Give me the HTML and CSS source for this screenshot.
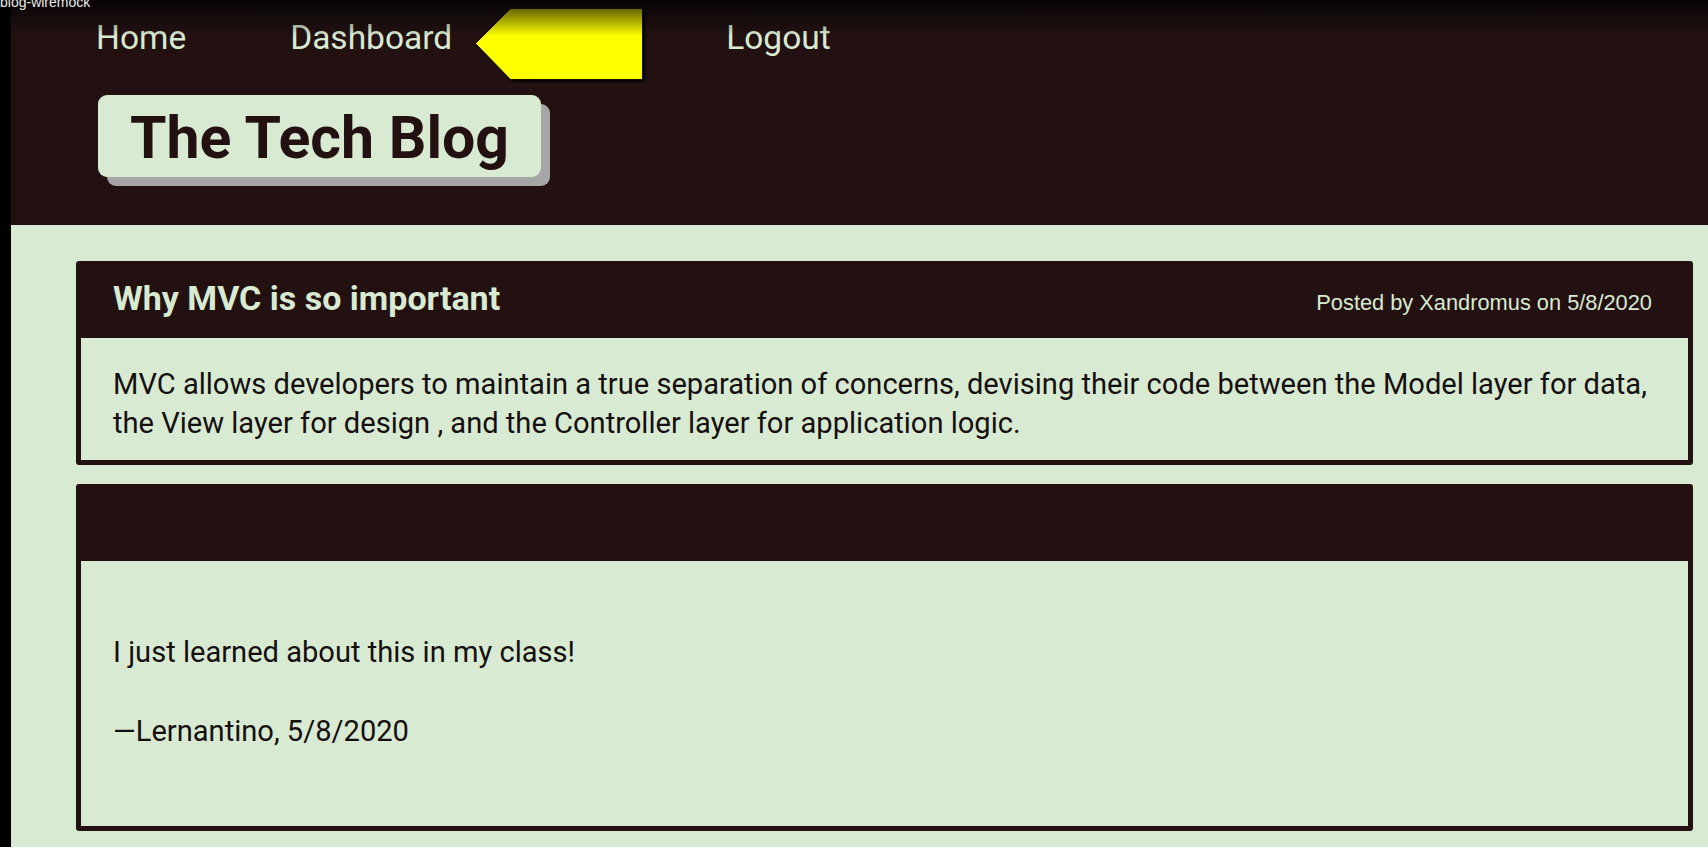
FILE: index.html
```html
<!DOCTYPE html>
<html lang="en">
<head>
<meta charset="utf-8">
<title>The Tech Blog</title>
<link rel="stylesheet" href="styles.css">
</head>
<body>
  <div class="frame">
    <div class="strip"></div>
    <div class="page">
      <header class="site-header">
        <nav class="nav">
          <a href="#" class="nav-link">Home</a>
          <a href="#" class="nav-link">Dashboard</a>
          <a href="#" class="nav-link logout">Logout</a>
        </nav>
        <svg class="pointer" width="172" height="76" viewBox="0 0 172 76" aria-hidden="true">
          <polygon points="0.5,35.5 35.5,0.5 167.5,0.5 167.5,71.5 35.5,71.5" fill="#ffff00" stroke="#1b1700" stroke-width="1"/>
        </svg>
        <div class="brand">
          <h1 class="brand-title">The Tech Blog</h1>
        </div>
      </header>
      <main class="posts">
        <article class="card">
          <div class="card-head">
            <h2 class="card-title">Why MVC is so important</h2>
            <span class="card-meta">Posted by Xandromus on 5/8/2020</span>
          </div>
          <div class="card-body">
            <p>MVC allows developers to maintain a true separation of concerns, devising their code between the Model layer for data, the View layer for design , and the Controller layer for application logic.</p>
          </div>
        </article>
        <article class="card">
          <div class="card-head"></div>
          <div class="card-body comment">
            <p>I just learned about this in my class!</p>
            <p>—Lernantino, 5/8/2020</p>
          </div>
        </article>
      </main>
    </div>
  </div>
  <div class="video-shade"></div>
  <div class="video-title">blog-wiremock</div>
</body>
</html>
```
FILE: styles.css
```css
html, body {
  margin: 0;
  padding: 0;
}

body {
  background: #000;
  font-family: Roboto, "Noto Sans", "Liberation Sans", sans-serif;
  height: 847px;
  overflow: hidden;
  position: relative;
}

.frame {
  display: flex;
  min-height: 847px;
}

.strip {
  flex: none;
  width: 11px;
  background: #000;
}

.page {
  flex: 1;
  background: #d9ead3;
  min-width: 0;
}

.site-header {
  position: relative;
  background: #231112;
  height: 225px;
  box-sizing: border-box;
  padding-top: 18px;
}

.nav {
  display: flex;
  align-items: center;
  gap: 104px;
  padding-left: 85px;
  height: 40px;
}

.nav-link {
  color: #d9ead3;
  font-size: 33.5px;
  line-height: 40px;
  text-decoration: none;
}

.nav-link.logout {
  margin-left: 170px;
}

.pointer {
  position: absolute;
  left: 464px;
  top: 8px;
  filter: drop-shadow(2px 2px 1px rgba(0, 0, 0, 0.85));
}

.brand {
  margin-top: 37px;
  padding-left: 87px;
}

.brand-title {
  display: inline-block;
  margin: 0;
  padding: 14px 32px 10px 32px;
  background: #d9ead3;
  color: #231112;
  font-size: 59px;
  font-weight: 700;
  line-height: 58px;
  border-radius: 9px;
  box-shadow: 9px 9px 0 #a6a6a6;
}

.posts {
  display: flex;
  flex-direction: column;
  gap: 19px;
  padding: 36px 15px 16px 65px;
}

.card {
  background: #231112;
  border-radius: 3px;
  padding: 0 5px 5px;
}

.card-head {
  height: 77px;
  box-sizing: border-box;
  padding: 18px 36px 0 32px;
  display: flex;
  justify-content: space-between;
  align-items: baseline;
}

.card-title {
  margin: 0;
  color: #d9ead3;
  font-size: 34px;
  font-weight: 700;
  line-height: 38px;
}

.card-meta {
  color: #d9ead3;
  font-family: "Liberation Sans", Arial, sans-serif;
  font-size: 21.8px;
}

.card-body {
  background: #d9ead3;
  color: #151010;
  font-size: 29.1px;
  line-height: 39px;
  padding: 27px 32px 17px;
}

.card-body p {
  margin: 0;
}

.card-body.comment {
  padding: 72px 32px 75px;
}

.card-body.comment p + p {
  margin-top: 40px;
}

.video-shade {
  position: absolute;
  left: 0;
  top: 0;
  width: 100%;
  height: 36px;
  background: linear-gradient(to bottom, rgba(0, 0, 0, 0.8), rgba(0, 0, 0, 0));
  pointer-events: none;
}

.video-title {
  position: absolute;
  left: 0;
  top: -6px;
  color: #e8e8e8;
  font-family: "Liberation Sans", Arial, sans-serif;
  font-size: 14px;
  line-height: 16px;
}
```
